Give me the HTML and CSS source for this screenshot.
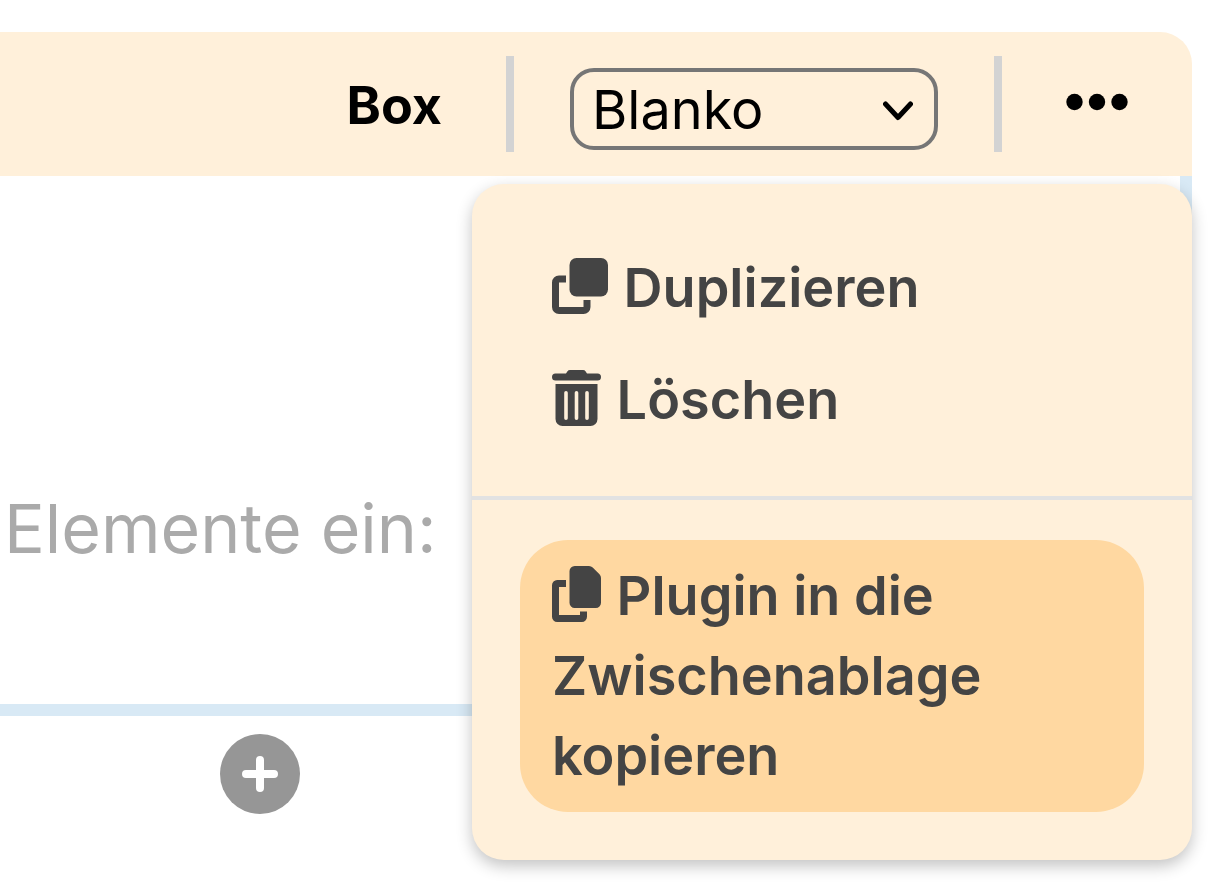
FILE: index.html
```html
<!DOCTYPE html>
<html lang="de">
<head>
<meta charset="utf-8">
<meta name="viewport" content="width=device-width, initial-scale=1">
<title>Box</title>
<link rel="stylesheet" href="styles.css">
</head>
<body>
<main class="editor">
  <header class="toolbar">
    <label class="toolbar-title" for="box-type">Box</label>
    <span class="toolbar-divider"></span>
    <div class="select">
      <select class="select-field" id="box-type">
        <option>Blanko</option>
      </select>
      <svg class="select-arrow" viewBox="0 0 30 20" aria-hidden="true"><path d="M2.500 3 15 16.500 27.500 3"/></svg>
    </div>
    <span class="toolbar-divider"></span>
    <button class="more" type="button" aria-label="Mehr" aria-expanded="true">
      <svg class="more-icon" viewBox="0 0 62 18" aria-hidden="true"><circle cx="8.500" cy="9" r="8.200"/><circle cx="31" cy="9" r="8.200"/><circle cx="53.500" cy="9" r="8.200"/></svg>
    </button>
    <div class="menu">
      <div class="menu-group menu-group-first">
        <button class="menu-item" type="button"><svg class="icon icon-wide" viewBox="0 0 56 56" aria-hidden="true"><rect x="17.500" width="38.500" height="38.500" rx="7"/><path class="icon-line" d="M14 21H7a3.500 3.500 0 0 0-3.500 3.500V49A3.500 3.500 0 0 0 7 52.500H31.500A3.500 3.500 0 0 0 35 49V42"/></svg> Duplizieren</button>
        <button class="menu-item" type="button"><svg class="icon" viewBox="0 0 49 56" aria-hidden="true"><path d="M3.500 3.500H14L15.500 1.200Q16.300 0 18 0H31Q32.700 0 33.500 1.200L35 3.500H45.500a3.500 3.500 0 0 1 0 7h-42a3.500 3.500 0 0 1 0-7Z"/><path fill-rule="evenodd" d="M3.500 14h42v35a7 7 0 0 1-7 7h-28a7 7 0 0 1-7-7ZM12.200 22.700v25.500a1.800 1.800 0 0 0 3.600 0V22.700a1.800 1.800 0 0 0-3.600 0ZM22.700 22.700v25.500a1.800 1.800 0 0 0 3.600 0V22.700a1.800 1.800 0 0 0-3.600 0ZM33.200 22.700v25.500a1.800 1.800 0 0 0 3.600 0V22.700a1.800 1.800 0 0 0-3.600 0Z"/></svg> Löschen</button>
      </div>
      <div class="menu-group menu-group-last">
        <button class="menu-item menu-item-active" type="button"><svg class="icon" viewBox="0 0 49 56" aria-hidden="true"><path d="M22.700 0H37Q39.200 0 40.700 1.500L47.500 8.300Q49 9.800 49 12V36.800a5.200 5.200 0 0 1-5.200 5.200H22.700a5.200 5.200 0 0 1-5.200-5.200V5.200A5.200 5.200 0 0 1 22.700 0Z"/><path class="icon-line" d="M14 17.500H5.200A1.700 1.700 0 0 0 3.500 19.200V50.800A1.700 1.700 0 0 0 5.200 52.500H29.800A1.700 1.700 0 0 0 31.500 50.800V45.500"/></svg> Plugin in die Zwischenablage kopieren</button>
      </div>
    </div>
  </header>
  <section class="canvas">
    <p class="hint">Elemente ein:</p>
  </section>
  <footer class="insert">
    <button class="add" type="button" aria-label="Hinzufügen">
      <svg class="add-icon" viewBox="0 0 36 36" aria-hidden="true"><path d="M18 4V32M4 18H32"/></svg>
    </button>
  </footer>
</main>
</body>
</html>
```
FILE: styles.css
```css
* {
  box-sizing: border-box;
}

body {
  margin: 0;
  background: #fff;
  color: #000;
  font-family: Inter, "Liberation Sans", sans-serif;
  font-size: 54px;
}

button,
select {
  margin: 0;
  padding: 0;
  border: 0;
  background: none;
  color: inherit;
  font: inherit;
}

.editor {
  min-height: 100vh;
  padding: 32px 24px 24px 0;
}

.toolbar {
  position: relative;
  display: flex;
  align-items: center;
  justify-content: flex-end;
  gap: 56px;
  min-height: 144px;
  padding: 24px 64px 24px 0;
  border-top-right-radius: 32px;
  background: #fff0da;
}

.toolbar-title {
  padding: 4px 8px 0 0;
  font-size: 52px;
  font-weight: 700;
  line-height: 80px;
}

.toolbar-divider {
  align-self: stretch;
  width: 8px;
  background: #d3d3d3;
}

.select {
  position: relative;
  width: 368px;
  padding-top: 10px;
}

.select-field {
  display: block;
  appearance: none;
  width: 100%;
  height: 82px;
  padding: 0 64px 0 18px;
  border: 4px solid #767676;
  border-radius: 24px;
}

.select-arrow {
  position: absolute;
  top: 43px;
  right: 25px;
  width: 30px;
  height: 20px;
  fill: none;
  stroke: #000;
  stroke-width: 5;
  stroke-linecap: round;
  stroke-linejoin: round;
  pointer-events: none;
}

.more {
  display: flex;
  margin-left: 8px;
  padding-bottom: 4px;
}

.more-icon {
  width: 62px;
  height: 18px;
}

.menu {
  position: absolute;
  top: calc(100% + 8px);
  right: 0;
  z-index: 1;
  width: 720px;
  border-radius: 32px;
  background: #fff0da;
  box-shadow: 0 6px 16px rgba(0, 0, 0, 0.24);
  color: #444;
}

.menu-group {
  padding: 40px 48px;
}

.menu-group-first {
  padding-top: 48px;
}

.menu-group-last {
  padding-bottom: 48px;
  border-top: 4px solid #e2e2e2;
}

.menu-item {
  display: block;
  width: 100%;
  padding: 16px 32px;
  border-radius: 48px;
  font-weight: 600;
  line-height: 80px;
  text-align: left;
}

.menu-item-active {
  background: #ffd8a1;
}

.icon {
  width: 49px;
  height: 56px;
  margin-right: 2px;
  vertical-align: -7px;
  fill: currentColor;
}

.icon-wide {
  width: 56px;
}

.icon-line {
  fill: none;
  stroke: currentColor;
  stroke-width: 7;
}

.canvas {
  min-height: 540px;
  padding: 312px 0 0 4px;
  border-right: 12px solid #d8e9f5;
  border-bottom: 12px solid #d8e9f5;
}

.hint {
  margin: 0;
  color: #aaa;
  font-size: 68px;
  font-weight: 400;
  line-height: 80px;
}

.insert {
  padding: 18px 0 0 220px;
}

.add {
  display: flex;
  align-items: center;
  justify-content: center;
  width: 80px;
  height: 80px;
  border-radius: 50%;
  background: #969696;
}

.add-icon {
  width: 36px;
  height: 36px;
  fill: none;
  stroke: #fff;
  stroke-width: 8;
  stroke-linecap: round;
}
```
